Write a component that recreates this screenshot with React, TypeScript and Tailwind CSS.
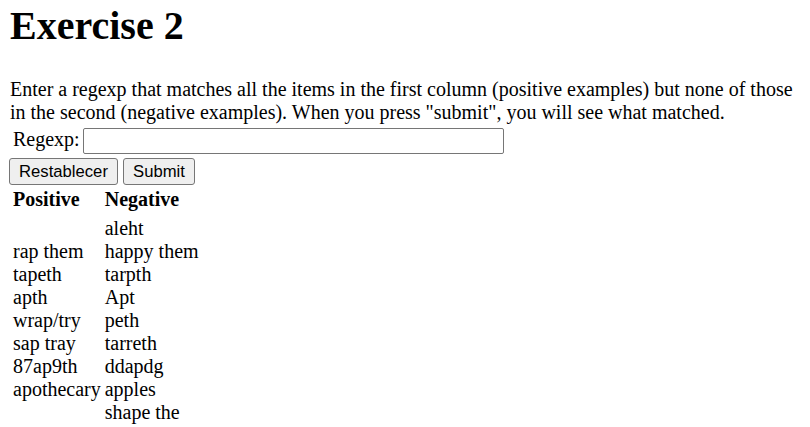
import React from "react";

const positives = ["", "rap them", "tapeth", "apth", "wrap/try", "sap tray", "87ap9th", "apothecary", ""];
const negatives = ["aleht", "happy them", "tarpth", "Apt", "peth", "tarreth", "ddapdg", "apples", "shape the"];

export default function App() {
  return (
    <div className="min-h-[427px] bg-white text-black px-[10px] font-['Liberation_Serif','Times_New_Roman',serif] text-[20px] leading-[23px]">
      <h1 className="pt-[3px] text-[40px] leading-[46px] font-bold">Exercise 2</h1>
      <p className="mt-[29px]">
        Enter a regexp that matches all the items in the first column (positive examples) but none of those in the second (negative examples). When you press "submit", you will see what matched.
      </p>
      <div className="mt-[4px] flex items-start">
        <span className="ml-[3px] w-[70px] leading-[23px]">Regexp:</span>
        <input
          type="text"
          className="h-[26px] w-[421px] border border-[#767676] rounded-[2px] bg-white outline-none px-[2px]"
        />
      </div>
      <div className="mt-[4px] -ml-[1px] flex gap-[5px] font-['Liberation_Sans',Arial,sans-serif] text-[16.67px] leading-[19px]">
        <button className="h-[27px] w-[109px] border border-[#767676] rounded-[3px] bg-[#efefef] text-black">Restablecer</button>
        <button className="h-[27px] w-[72px] border border-[#767676] rounded-[3px] bg-[#efefef] text-black">Submit</button>
      </div>
      <div className="mt-[3px] ml-[3px] flex gap-[4px]">
        <div className="flex flex-col">
          <div className="font-bold">Positive</div>
          <div className="mt-[6px] flex flex-col">
            {positives.map((p, i) => (
              <div key={i} className="h-[23px] whitespace-nowrap">{p}</div>
            ))}
          </div>
        </div>
        <div className="flex flex-col">
          <div className="font-bold">Negative</div>
          <div className="mt-[6px] flex flex-col">
            {negatives.map((n, i) => (
              <div key={i} className="h-[23px] whitespace-nowrap">{n}</div>
            ))}
          </div>
        </div>
      </div>
    </div>
  );
}
